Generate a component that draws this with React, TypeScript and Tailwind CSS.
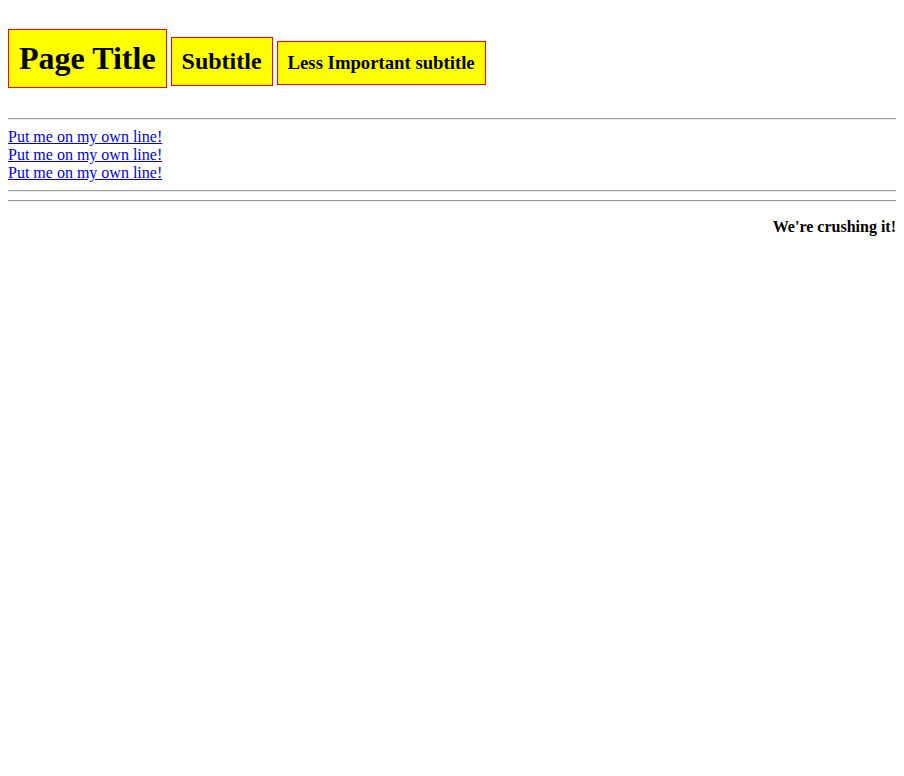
const headingBox = "border border-[#ff0000] bg-[#ffff00] p-2.5 font-bold leading-[normal]";

const Divider = () => (
  <hr className="my-2 h-0 border-0 border-t border-b border-t-[#9a9a9a] border-b-[#eeeeee]" />
);

const App = () => {
  return (
    <div className="min-h-screen bg-white p-2 font-['Liberation_Serif',serif] text-base leading-[normal] text-black">
      <div className="flex items-baseline gap-[4px]">
        <h1 className={`${headingBox} my-[21.44px] text-[32px]`}>Page Title</h1>
        <h2 className={`${headingBox} my-[19.92px] text-[24px]`}>Subtitle</h2>
        <h3 className={`${headingBox} my-[18.72px] text-[18.72px]`}>
          Less Important subtitle
        </h3>
      </div>

      <Divider />

      <div className="flex flex-col items-start">
        {[0, 1, 2].map((i) => (
          <a key={i} href="#" className="leading-[18px] text-[#0000ee] underline">
            Put me on my own line!
          </a>
        ))}
      </div>

      <Divider />
      <Divider />

      <p className="my-4 text-right font-bold">We're crushing it!</p>
    </div>
  );
};

export default App;
